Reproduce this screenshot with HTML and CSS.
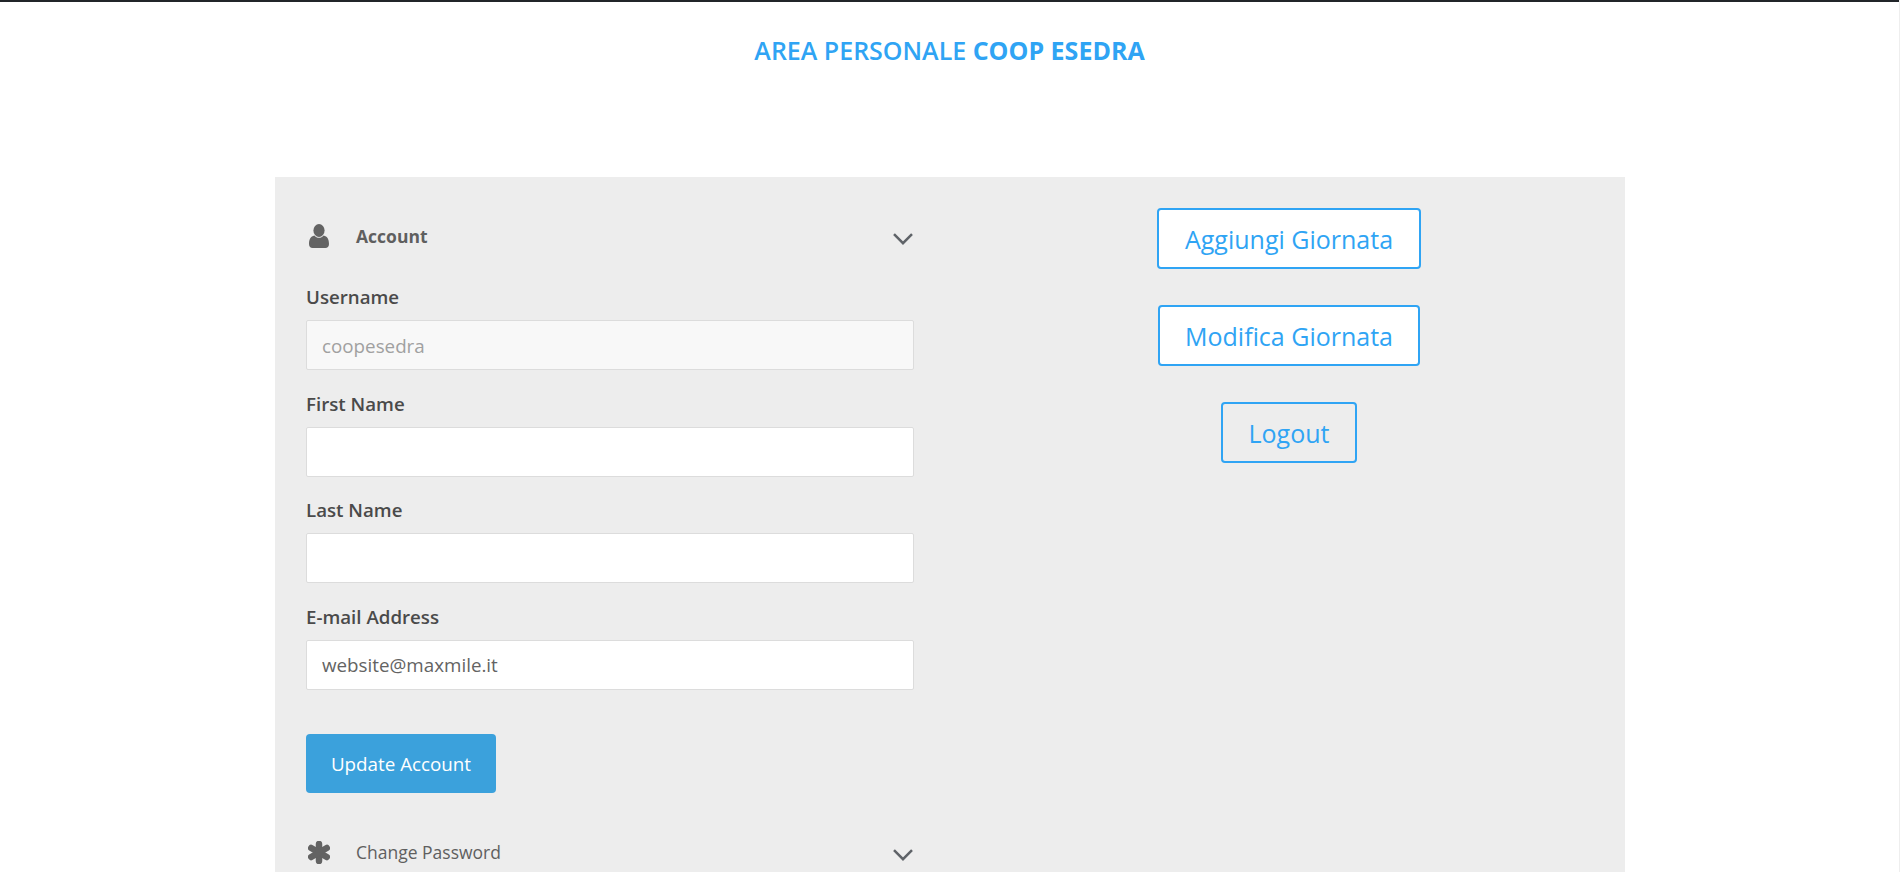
FILE: index.html
```html
<!DOCTYPE html>
<html lang="it">
<head>
<meta charset="utf-8">
<title>Area Personale</title>
<link rel="stylesheet" href="styles.css">
</head>
<body>
<div class="page">
  <h1 class="title">AREA PERSONALE <strong>COOP ESEDRA</strong></h1>
  <main class="panel">
    <section class="col-left">
      <div class="acc-head acc-open">
        <svg class="acc-icon" viewBox="0 0 20 24" aria-hidden="true"><ellipse cx="10" cy="6.5" rx="5.6" ry="6.5" fill="#636363"/><path d="M0 20c0-5 1.6-7.6 5.4-8.6 1.2 1.5 2.8 2.3 4.6 2.3s3.4-.8 4.6-2.3c3.8 1 5.400 3.600 5.400 8.600 0 2.400-1.500 4-3.600 4H3.600C1.500 24 0 22.400 0 20z" fill="#636363"/></svg>
        <span class="acc-title">Account</span>
        <svg class="acc-chev" viewBox="0 0 20 12" aria-hidden="true"><path d="M1 1.200l9 9 9-9" fill="none" stroke="#5f6368" stroke-width="2.500"/></svg>
      </div>
      <form class="form">
        <div class="field"><label class="label">Username</label><input class="input input-disabled" value="coopesedra" disabled></div>
        <div class="field"><label class="label">First Name</label><input class="input" value=""></div>
        <div class="field"><label class="label">Last Name</label><input class="input" value=""></div>
        <div class="field"><label class="label">E-mail Address</label><input class="input" value="website@maxmile.it"></div>
        <button class="submit" type="button">Update Account</button>
      </form>
      <div class="acc-head acc-closed">
        <svg class="acc-icon acc-star" viewBox="0 0 22 23" aria-hidden="true"><g stroke="#636363" stroke-width="6.500" stroke-linecap="round"><path d="M11 3v17"/><path d="M3.200 7l15.600 9"/><path d="M18.800 7l-15.600 9"/></g></svg>
        <span class="acc-title-light">Change Password</span>
        <svg class="acc-chev" viewBox="0 0 20 12" aria-hidden="true"><path d="M1 1.200l9 9 9-9" fill="none" stroke="#5f6368" stroke-width="2.500"/></svg>
      </div>
    </section>
    <aside class="col-right">
      <a class="btn btn-filled">Aggiungi Giornata</a>
      <a class="btn btn-filled">Modifica Giornata</a>
      <a class="btn">Logout</a>
    </aside>
  </main>
</div>
</body>
</html>
```

FILE: styles.css
```css
* { box-sizing: border-box; }
html, body { margin: 0; padding: 0; height: 100%; overflow: hidden; background: #fff; }
body { font-family: "Open Sans", "Liberation Sans", sans-serif; border-right: 1px solid #eee; }
.page { border-top: 2px solid #212529; height: 872px; }
.title { margin: 0; padding-top: 32px; height: 175px; text-align: center; font-size: 25px; line-height: 32px; font-weight: 600; color: #2fa4f4; }
.title strong { font-weight: 700; }
.panel { width: 1350px; margin-left: 275px; height: 695px; background: #ededed; padding: 0 31px; display: grid; grid-template-columns: 608px 610px; column-gap: 70px; overflow: hidden; }
.col-left { padding-top: 45px; }
.acc-head { display: flex; align-items: center; height: 28px; padding-left: 3px; }
.acc-icon { width: 20px; height: 24px; flex: none; }
.acc-star { width: 22px; height: 23px; margin-left: -1px; }
.acc-title { margin-left: 27px; font-size: 17.5px; font-weight: 700; color: #5f5f5f; }
.acc-title-light { margin-left: 26px; font-size: 17.5px; font-weight: 400; color: #5f5f5f; }
.acc-chev { margin-left: auto; margin-right: 1px; width: 20px; height: 12px; flex: none; margin-top: 6px; }
.form { margin-top: 33px; }
.field { height: 106.500px; }
.label { display: block; height: 37px; font-size: 18.7px; line-height: 28px; font-weight: 600; color: #4a4a4a; }
.input { display: block; width: 100%; height: 50px; padding: 1px 15px 0; border: 1px solid #dcdcdc; border-radius: 2px; background: #fff; font: 400 18.8px "Open Sans", sans-serif; color: #636363; }
.input-disabled { background: #f8f8f8; color: #a0a0a0; opacity: 1; }
.submit { display: block; margin-top: 25px; width: 190px; height: 59px; border: 0; border-radius: 4px; background: #3ba1dc; color: #fff; font: 400 18.8px "Open Sans", sans-serif; }
.acc-closed { margin-top: 45px; }
.col-right { display: flex; flex-direction: column; align-items: center; padding-top: 31px; gap: 36px; }
.btn { display: block; height: 61px; padding: 0 25.5px; border: 2px solid #2fa4f4; border-radius: 4px; font-size: 25px; line-height: 58px; color: #2fa4f4; }
.btn-filled { background: #fff; }
```
